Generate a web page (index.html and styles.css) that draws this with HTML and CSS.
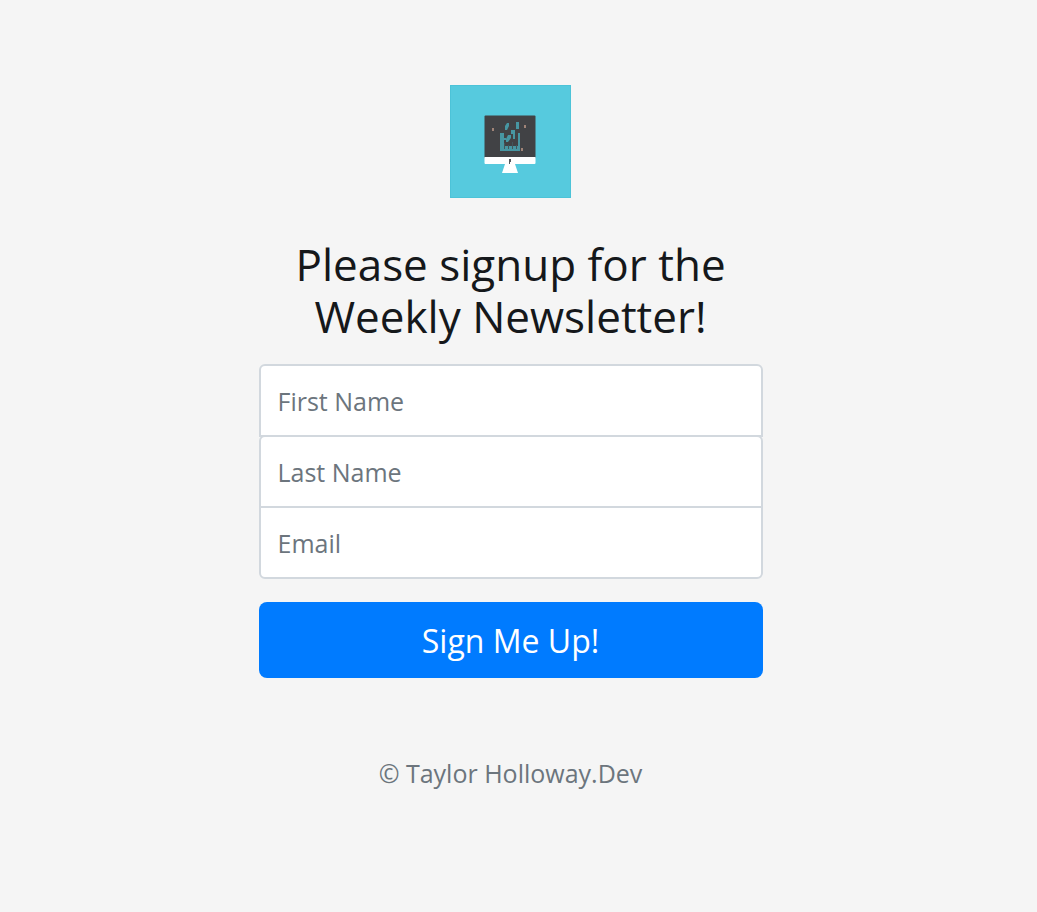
FILE: index.html
```html
<!DOCTYPE html>
<html lang="en">
<head>
<meta charset="utf-8">
<meta name="viewport" content="width=device-width, initial-scale=1">
<title>Weekly Newsletter Signup</title>
<link rel="stylesheet" href="styles.css">
</head>
<body>
<main class="page">
  <form class="signup">
    <svg class="logo" viewBox="0 0 121 113" role="img" aria-label="Desktop computer">
      <rect width="121" height="113" fill="#56cade"/>
      <path d="M.5 0v113M120.500 0v113M0 .5h121M0 112.500h121" stroke="#4cc3d8" fill="none"/>
      <rect x="34.500" y="30.500" width="51" height="43" rx="1" fill="#414245"/>
      <path d="M34.500 72h51v6q0 1-1 1H65l3 9H52l3-9H35.500q-1 0-1-1z" fill="#fff"/>
      <path d="M59 74h2v3h-1v2h-1z" fill="#55565a"/>
      <g fill="#4796a2">
        <path d="M57 38h2v3l-2 4h-2v-4zM66 37h3v7h-3zM61 45h4v9h-2v-5h-2zM50 48h4v5h2v2h-2v6h14V48h2v18H50zM58 50h3v3l-3 4h-2v-3z"/>
      </g>
      <path d="M54.500 58v6M58.500 60v4M62.500 57v7M66.500 60v4" stroke="#43565b" stroke-width="1" fill="none"/>
      <g fill="#a08478"><rect x="42" y="43" width="2" height="3"/><rect x="74" y="40" width="2" height="3"/><rect x="71" y="63" width="2" height="3"/></g>
    </svg>
    <h1 class="title">Please signup for the Weekly Newsletter!</h1>
    <div class="fields">
      <input class="field field-first" type="text" name="first" placeholder="First Name" aria-label="First Name">
      <input class="field field-middle" type="text" name="last" placeholder="Last Name" aria-label="Last Name">
      <input class="field field-last" type="email" name="email" placeholder="Email" aria-label="Email">
    </div>
    <button class="submit" type="submit">Sign Me Up!</button>
    <p class="copyright">© Taylor Holloway.Dev</p>
  </form>
</main>
</body>
</html>
```
FILE: styles.css
```css
* {
  box-sizing: border-box;
}

body {
  margin: 0;
  background: #f5f5f5;
  color: #15181b;
  font-family: "Open Sans", "Noto Sans", sans-serif;
}

.page {
  display: flex;
  justify-content: center;
  padding: 85px 16px 85px 0;
}

.signup {
  display: flex;
  flex-direction: column;
  width: 100%;
  max-width: 504px;
  text-align: center;
}

.logo {
  width: 121px;
  align-self: center;
}

.title {
  margin: 40px 0 22px;
  padding: 0 24px;
  font-size: 44px;
  font-weight: 400;
  line-height: 52px;
}

.fields {
  display: flex;
  flex-direction: column;
}

.field {
  width: 100%;
  height: 73px;
  padding: 0 17px;
  border: 2px solid #d2d8de;
  border-radius: 6px;
  background: #fff;
  color: #495057;
  font: inherit;
  font-size: 25px;
}

.field + .field {
  margin-top: -2px;
}

.field::placeholder {
  color: #6c757d;
  opacity: 1;
}

.field-first,
.field-middle {
  border-bottom-left-radius: 0;
  border-bottom-right-radius: 0;
}

.field-last {
  border-top-left-radius: 0;
  border-top-right-radius: 0;
}

.submit {
  height: 76px;
  margin-top: 23px;
  border: 0;
  border-radius: 8px;
  background: #007bff;
  color: #fff;
  font: inherit;
  font-size: 32px;
  cursor: pointer;
}

.copyright {
  margin: 77px 0 0;
  color: #6c757d;
  font-size: 25px;
  line-height: 36px;
}
```
